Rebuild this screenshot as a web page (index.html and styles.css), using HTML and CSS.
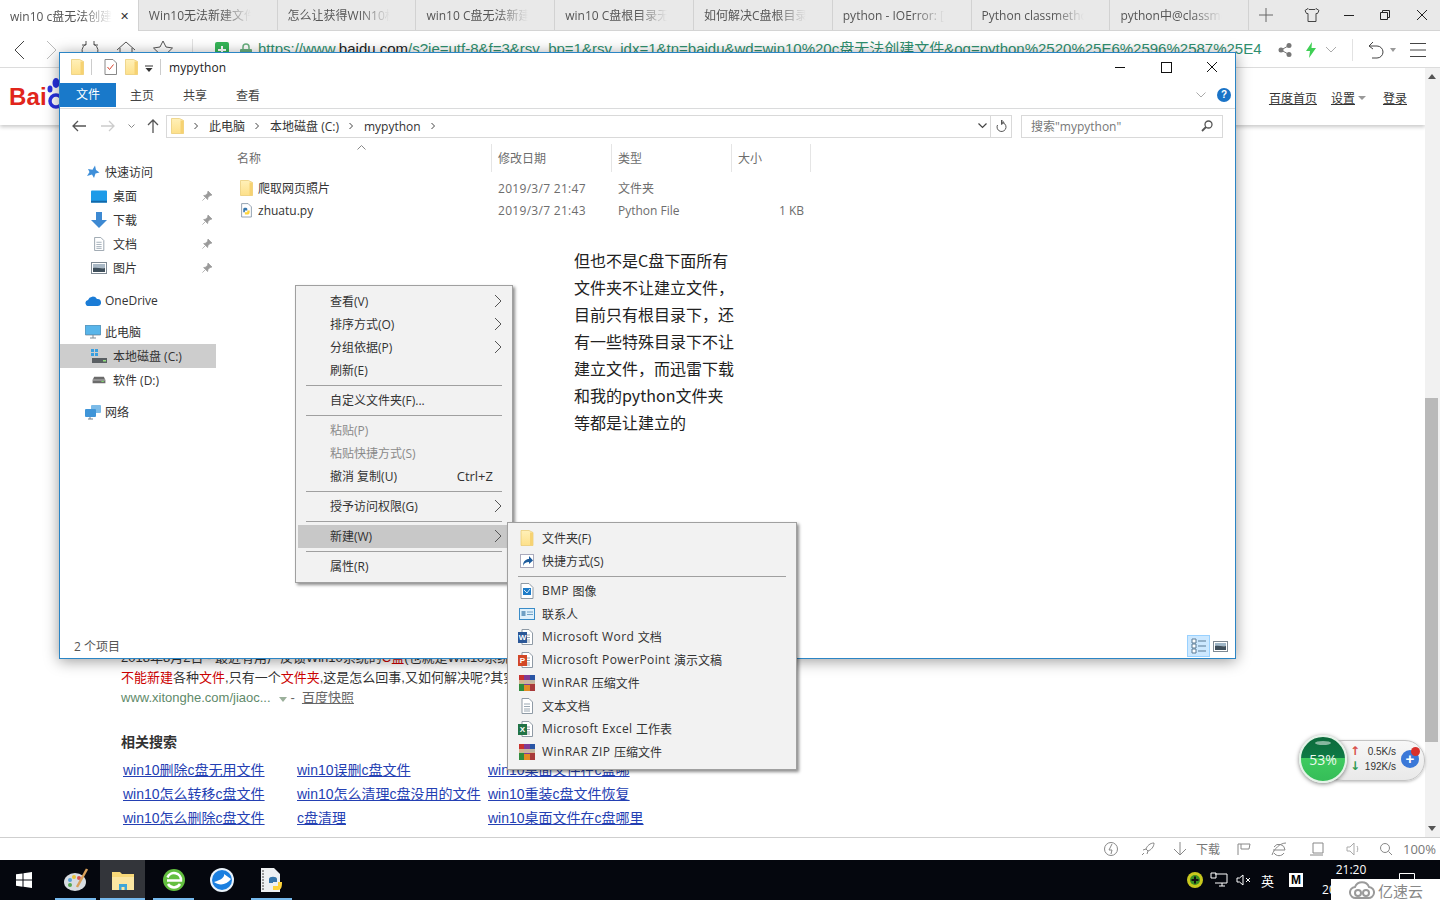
FILE: index.html
```html
<!DOCTYPE html>
<html lang="zh-CN">
<head>
<meta charset="utf-8">
<title>mypython</title>
<link rel="stylesheet" href="styles.css">
</head>
<body>
<svg class="defs" width="0" height="0" aria-hidden="true">
  <defs>
    <linearGradient id="fg" x1="0" y1="0" x2="0" y2="1"><stop offset="0" stop-color="#fff0b8"/><stop offset="1" stop-color="#fde08a"/></linearGradient>
    <symbol id="folder" viewBox="0 0 13 16"><path d="M.5.500h8l4 2v13H.5z" fill="url(#fg)" stroke="#e8c86e" stroke-width=".7"/><path d="M9.500 2.500h3v13h-3z" fill="#f6d272"/></symbol>
    <symbol id="chev" viewBox="0 0 10 14"><path d="M2 1l6 6-6 6" fill="none" stroke="#555" stroke-width="1"/></symbol>
    <symbol id="crumb" viewBox="0 0 6 8"><path d="M1.500 1l3 3-3 3" fill="none" stroke="#444" stroke-width="1"/></symbol>
    <symbol id="pin" viewBox="0 0 12 12"><path d="M7 1l4 4-2 .6-2 2-.4 2L2.600 5.600l2-.4 2-2zM4 8l-2.600 2.600" fill="#9a9a9a" stroke="#9a9a9a" stroke-width=".7"/></symbol>
    <symbol id="disk" viewBox="0 0 18 10"><path d="M3 1h12l2 4v4H1V5z" fill="#6b6b6b"/><path d="M1 5h16" stroke="#ccc"/><rect x="12" y="6" width="3" height="1.500" fill="#7ed36b"/></symbol>
    <symbol id="doc" viewBox="0 0 14 16"><path d="M2 .5h7l3.500 3.500v11.500H2z" fill="#fff" stroke="#8f9aa5"/><path d="M4 6h6M4 8.500h6M4 11h6M4 13h6" stroke="#9aa7b2"/></symbol>
    <symbol id="rar" viewBox="0 0 16 16"><rect width="16" height="16" fill="#7f3b96"/><rect width="5" height="8" fill="#c8322d"/><rect x="11" width="5" height="8" fill="#2a55a5"/><rect y="8" width="5" height="8" fill="#2f8c3c"/><rect x="11" y="8" width="5" height="8" fill="#a83a3a"/><rect x="5" y="10" width="6" height="6" fill="#e28a24"/><rect y="5" width="16" height="4" fill="#d8c9a0" opacity=".85"/></symbol>
    <symbol id="pyfile" viewBox="0 0 16 18"><path d="M2 .5h8l4 4V17H2z" fill="#fff" stroke="#7d8ea0"/><path d="M4 7c0-2 5-2 5 0v2H6v2H4z" fill="#3776ab"/><path d="M12 9c0 2 0 5-3 5H6v-3h3V9z" fill="#ffd43b"/></symbol>
  </defs>
</svg>

<div class="screen">
  <div class="browser">
    <div class="tabbar">
      <div class="tab tab-active"><span class="tab-text">win10 c盘无法创建文件</span><span class="tab-close">✕</span></div>
      <div class="tab"><span class="tab-text">Win10无法新建文件夹</span></div>
      <div class="tab"><span class="tab-text">怎么让获得WIN10权限</span></div>
      <div class="tab"><span class="tab-text">win10 C盘无法新建文件</span></div>
      <div class="tab"><span class="tab-text">win10 C盘根目录无法</span></div>
      <div class="tab"><span class="tab-text">如何解决C盘根目录无</span></div>
      <div class="tab"><span class="tab-text">python - IOError: [Er</span></div>
      <div class="tab"><span class="tab-text">Python classmethod</span></div>
      <div class="tab"><span class="tab-text">python中@classmeth</span></div>
      <div class="tab-tools">
        <svg class="tt-plus" width="16" height="16" viewBox="0 0 16 16"><path d="M8 1v14M1 8h14" stroke="#666" fill="none"/></svg>
        <svg class="tt-shirt" width="16" height="16" viewBox="0 0 16 16"><path d="M4 1.500L1 3.500l1.500 3H4v8h8v-8h1.500l1.500-3-3-2-1 1H5z" stroke="#444" fill="none"/></svg>
        <svg class="tt-min" width="12" height="12" viewBox="0 0 12 12"><path d="M1 6.500h10" stroke="#222" fill="none"/></svg>
        <svg class="tt-max" width="12" height="12" viewBox="0 0 12 12"><path d="M1.500 3.500h7v7h-7zM3.500 3.500v-2h7v7h-2" stroke="#222" fill="none"/></svg>
        <svg class="tt-close" width="12" height="12" viewBox="0 0 12 12"><path d="M1 1l10 10M11 1L1 11" stroke="#222" fill="none"/></svg>
      </div>
    </div>

    <div class="toolbar">
      <svg class="tb-back" width="12" height="20" viewBox="0 0 12 20"><path d="M11 1L2 10l9 9" stroke="#444" fill="none"/></svg>
      <svg class="tb-fwd" width="12" height="20" viewBox="0 0 12 20"><path d="M1 1l9 9-9 9" stroke="#bbb" fill="none"/></svg>
      <svg class="tb-reload" width="20" height="20" viewBox="0 0 20 20"><path d="M6 4a8 8 0 1 0 8 0M6 1v4H2M14 1v4h4" stroke="#555" fill="none"/></svg>
      <svg class="tb-home" width="20" height="20" viewBox="0 0 20 20"><path d="M1 10l9-8 9 8M4 8v10h12V8" stroke="#555" fill="none"/></svg>
      <svg class="tb-star" width="20" height="20" viewBox="0 0 20 20"><path d="M10 1l3 6 6.500 1-4.700 4.500 1.200 6.500L10 16l-6 3 1.200-6.500L.5 8 7 7z" stroke="#555" fill="none"/></svg>
      <span class="tb-sep"></span>
      <svg class="tb-safe" width="14" height="16" viewBox="0 0 14 16"><rect width="14" height="16" rx="2" fill="#35b558"/><path d="M7 4v8M3 8h8" stroke="#fff" stroke-width="2"/></svg>
      <svg class="tb-lock" width="12" height="14" viewBox="0 0 12 14"><path d="M3 6V4a3 3 0 0 1 6 0v2" stroke="#69b07f" fill="none" stroke-width="1.500"/><rect y="6" width="12" height="8" rx="1" fill="#69b07f"/></svg>
      <span class="url"><span class="url-host">https://www.</span><span class="url-bold">baidu.com</span><span class="url-host">/s?ie=utf-8&amp;f=3&amp;rsv_bp=1&amp;rsv_idx=1&amp;tn=baidu&amp;wd=win10%20c盘无法创建文件&amp;oq=python%2520%25E6%2596%2587%25E4</span></span>
      <svg class="tb-share" width="14" height="14" viewBox="0 0 14 14"><circle cx="11" cy="2.500" r="2.500" fill="#777"/><circle cx="3" cy="7" r="2.500" fill="#777"/><circle cx="11" cy="11.500" r="2.500" fill="#777"/><path d="M11 2.500L3 7l8 4.500" stroke="#777" fill="none"/></svg>
      <svg class="tb-bolt" width="10" height="16" viewBox="0 0 10 16"><path d="M6 0L0 9h4l-1 7 7-10H5.500z" fill="#3fcf55"/></svg>
      <svg class="tb-down" width="12" height="8" viewBox="0 0 12 8"><path d="M1 1l5 5 5-5" stroke="#aaa" fill="none"/></svg>
      <span class="tb-sep tb-sep2"></span>
      <svg class="tb-undo" width="18" height="18" viewBox="0 0 18 18"><path d="M6 1L2 5l4 3M2 5h8a6 6 0 0 1 0 12H5" stroke="#444" fill="none"/></svg>
      <span class="tb-caret"></span>
      <svg class="tb-menu" width="18" height="16" viewBox="0 0 18 16"><path d="M1 1.500h16M1 8h16M1 14.500h16" stroke="#444" fill="none"/></svg>
    </div>

    <div class="viewport">
      <div class="page">
        <header class="bd-header">
          <div class="bd-logo"><span class="bd-bai">Bai</span>
            <svg class="bd-paw" width="16" height="32" viewBox="0 0 16 32"><ellipse cx="9" cy="5" rx="3.500" ry="5" fill="#2932e1"/><ellipse cx="3" cy="11" rx="2.500" ry="3.500" fill="#2932e1"/><circle cx="9" cy="23" r="6" fill="none" stroke="#2932e1" stroke-width="3.500"/></svg>
          </div>
          <nav class="bd-nav">
            <a class="bd-link">百度首页</a>
            <a class="bd-link bd-set">设置</a><span class="bd-caret"></span>
            <a class="bd-link bd-login">登录</a>
          </nav>
        </header>
        <div class="results">
          <p class="snip">2018年8月2日 - 最近有用户反馈Win10系统的<em>C盘</em>(也就是Win10系统</p>
          <p class="snip"><em>不能新建</em>各种<em>文件</em>,只有一个<em>文件夹</em>,这是怎么回事,又如何解决呢?其实</p>
          <p class="snip src">www.xitonghe.com/jiaoc...<span class="src-caret"></span><span class="src-dash">-</span><a class="cache">百度快照</a></p>
          <h3 class="rel-title">相关搜索</h3>
          <div class="rel-grid">
            <a>win10删除c盘无用文件</a><a>win10误删c盘文件</a><a>win10桌面文件在c盘哪</a>
            <a>win10怎么转移c盘文件</a><a>win10怎么清理c盘没用的文件</a><a>win10重装c盘文件恢复</a>
            <a>win10怎么删除c盘文件</a><a>c盘清理</a><a>win10桌面文件在c盘哪里</a>
          </div>
        </div>
      </div>
      <div class="scrollbar">
        <span class="sb-up"></span>
        <span class="sb-thumb"></span>
        <span class="sb-down"></span>
      </div>
    </div>

    <div class="statusbar">
      <svg class="st-a" width="16" height="16" viewBox="0 0 16 16"><circle cx="8" cy="8" r="6.500" stroke="#888" fill="none"/><path d="M9 3L6 9h3l-1 4" stroke="#888" fill="none"/></svg>
      <svg class="st-b" width="16" height="16" viewBox="0 0 16 16"><path d="M14 2c-4 0-7 3-8 6l2 2c3-1 6-4 6-8zM6 8L3 9M8 10l-1 3M4 12l-2 2" stroke="#888" fill="none"/></svg>
      <svg class="st-c" width="14" height="16" viewBox="0 0 14 16"><path d="M7 1v13M1 8l6 6 6-6" stroke="#888" fill="none"/></svg>
      <span class="st-dl">下载</span>
      <svg class="st-d" width="16" height="16" viewBox="0 0 16 16"><path d="M2 14V3h12l-1 5H5M5 3v5" stroke="#888" fill="none"/></svg>
      <svg class="st-e" width="16" height="16" viewBox="0 0 16 16"><path d="M2 9h12a6 6 0 0 0-11-3M3 12a6 6 0 0 0 10 0M1 14C3 8 9 2 15 2" stroke="#888" fill="none"/></svg>
      <svg class="st-f" width="16" height="16" viewBox="0 0 16 16"><path d="M4 2h10v10H4zM1 14h13" stroke="#888" fill="none"/></svg>
      <svg class="st-g" width="16" height="16" viewBox="0 0 16 16"><path d="M1 6h3l4-4v12l-4-4H1zM11 5c1 2 1 4 0 6" stroke="#aaa" fill="none"/></svg>
      <svg class="st-h" width="14" height="14" viewBox="0 0 14 14"><circle cx="6" cy="6" r="4.500" stroke="#888" fill="none"/><path d="M9.500 9.500L13 13" stroke="#888"/></svg>
      <span class="st-zoom">100%</span>
    </div>
  </div>

  <div class="taskbar">
    <svg class="task-win" width="16" height="16" viewBox="0 0 16 16"><path d="M0 2.300l6.500-.9v6.200H0zM7.500 1.300L16 0v7.600H7.500zM0 8.600h6.500v6.100L0 13.800zM7.500 8.600H16V16l-8.500-1.200z" fill="#fff"/></svg>
    <div class="task-app task-on task-a1"><svg width="26" height="26" viewBox="0 0 26 26"><ellipse cx="12" cy="15" rx="11" ry="9" fill="#d8dde2"/><circle cx="7" cy="13" r="2" fill="#5aa3d8"/><circle cx="11" cy="10" r="2" fill="#e8c33a"/><circle cx="16" cy="11" r="2" fill="#d9534f"/><circle cx="7" cy="18" r="2" fill="#55a84f"/><path d="M24 2L14 20" stroke="#d9a05a" stroke-width="2.500"/></svg></div>
    <div class="task-app task-on task-active"><svg width="24" height="22" viewBox="0 0 24 22"><path d="M1 3h8l2 2h12v16H1z" fill="#f8d878"/><path d="M1 8h22v13H1z" fill="#fbe6a2"/><path d="M8 21v-6h8v6h-2.500v-3h-3v3z" fill="#3ea6d8"/></svg></div>
    <div class="task-app task-on task-a3"><svg width="24" height="24" viewBox="0 0 24 24"><circle cx="12" cy="12" r="11" fill="#63bf3f"/><path d="M5 12.500h14a7 7 0 0 0-13.500-3M18 16a7 7 0 0 1-12 0" fill="none" stroke="#fff" stroke-width="2.500"/></svg></div>
    <div class="task-app task-a4"><svg width="26" height="26" viewBox="0 0 26 26"><circle cx="13" cy="13" r="12" fill="#eaf3fb"/><circle cx="13" cy="13" r="10" fill="#1a7fe0"/><path d="M5 15c5 4 13 3 17-3l-7-5c1 3-3 6-10 8z" fill="#fff"/></svg></div>
    <div class="task-app task-on"><svg width="24" height="26" viewBox="0 0 24 26"><path d="M1 1h13l6 6v18H1z" fill="#eef0f2"/><path d="M3 3v20" stroke="#999" stroke-width="2" stroke-dasharray="2 1"/><path d="M9 12c0-3 8-3 8 0v3h-4v1H9z" fill="#3776ab"/><path d="M22 15c0 3 0 8-4 8h-5v-4h5v-4z" fill="#ffd43b"/></svg></div>
    <div class="tray">
      <svg class="tray-360" width="18" height="18" viewBox="0 0 18 18"><circle cx="9" cy="9" r="8" fill="#c8c81e"/><circle cx="9" cy="9" r="5" fill="#3b8f22"/><path d="M9 5.500v7M5.500 9h7" stroke="#111" stroke-width="2"/></svg>
      <svg class="tray-net" width="18" height="16" viewBox="0 0 18 16"><path d="M5 2h12v9H5M9 14h6M12 11v3M1 1h5v5H1z" stroke="#fff" fill="none"/></svg>
      <svg class="tray-vol" width="16" height="14" viewBox="0 0 16 14"><path d="M1 5h2.500L7 2v10L3.500 9H1zM10 5l4 4M14 5l-4 4" stroke="#fff" fill="none"/></svg>
      <span class="tray-ime">英</span>
      <span class="tray-m">M</span>
      <div class="clock"><span class="clock-t">21:20</span><span class="clock-d">2019/3/7</span></div>
      <svg class="tray-note" width="16" height="14" viewBox="0 0 16 14"><path d="M.5.500h15v10H8l-2 3v-3H.5z" stroke="#fff" fill="none"/></svg>
    </div>
  </div>
  <div class="underscreen"></div>

  <div class="explorer">
    <div class="ex-title">
      <svg class="qa-f1" width="13" height="16"><use href="#folder"/></svg>
      <span class="qa-sep"></span>
      <svg class="qa-doc" width="13" height="16" viewBox="0 0 13 16"><path d="M1 .5h8l3.500 3.500v11.500H1z" fill="#fff" stroke="#888"/><path d="M3.500 8l2 2.500 4-5" stroke="#d9452f" fill="none"/></svg>
      <svg class="qa-f2" width="13" height="16"><use href="#folder"/></svg>
      <svg class="qa-arrow" width="8" height="8" viewBox="0 0 8 8"><path d="M0 1h8" stroke="#333"/><path d="M.5 3h7L4 7z" fill="#333"/></svg>
      <span class="qa-sep qa-sep2"></span>
      <span class="ex-name">mypython</span>
      <svg class="ex-min" width="12" height="12" viewBox="0 0 12 12"><path d="M1 6.500h10" stroke="#111"/></svg>
      <svg class="ex-max" width="11" height="11" viewBox="0 0 11 11"><rect x=".5" y=".5" width="10" height="10" fill="none" stroke="#111"/></svg>
      <svg class="ex-close" width="12" height="12" viewBox="0 0 12 12"><path d="M1 1l10 10M11 1L1 11" stroke="#111"/></svg>
    </div>
    <div class="ex-ribbon">
      <span class="rb-file">文件</span>
      <span class="rb-tab">主页</span>
      <span class="rb-tab">共享</span>
      <span class="rb-tab">查看</span>
      <svg class="rb-chev" width="10" height="6" viewBox="0 0 10 6"><path d="M.5.500L5 5 9.500.5" stroke="#aaa" fill="none"/></svg>
      <span class="rb-help">?</span>
    </div>
    <div class="ex-addr">
      <svg class="ad-back" width="14" height="12" viewBox="0 0 14 12"><path d="M6 1L1 6l5 5M1 6h13" stroke="#555" stroke-width="1.300" fill="none"/></svg>
      <svg class="ad-fwd" width="14" height="12" viewBox="0 0 14 12"><path d="M8 1l5 5-5 5M0 6h13" stroke="#ccc" stroke-width="1.300" fill="none"/></svg>
      <svg class="ad-drop" width="7" height="5" viewBox="0 0 7 5"><path d="M.5.500l3 3 3-3" stroke="#888" fill="none"/></svg>
      <svg class="ad-up" width="12" height="14" viewBox="0 0 12 14"><path d="M1 6l5-5 5 5M6 1v13" stroke="#555" stroke-width="1.300" fill="none"/></svg>
      <div class="ad-box">
        <svg class="ad-folder" width="13" height="16"><use href="#folder"/></svg>
        <svg class="ad-cr" width="6" height="8"><use href="#crumb"/></svg>
        <span class="ad-txt">此电脑</span>
        <svg class="ad-cr" width="6" height="8"><use href="#crumb"/></svg>
        <span class="ad-txt">本地磁盘 (C:)</span>
        <svg class="ad-cr" width="6" height="8"><use href="#crumb"/></svg>
        <span class="ad-txt">mypython</span>
        <svg class="ad-cr" width="6" height="8"><use href="#crumb"/></svg>
        <svg class="ad-more" width="9" height="6" viewBox="0 0 9 6"><path d="M.5.500l4 4 4-4" stroke="#444" stroke-width="1.200" fill="none"/></svg>
        <span class="ad-refresh"><svg width="11" height="13" viewBox="0 0 11 13"><path d="M5.500 2.500a4.500 4.500 0 1 1-4 2.500M5.500 0v4.500L8 2.500z" stroke="#555" fill="none"/></svg></span>
      </div>
      <div class="ad-search"><span>搜索"mypython"</span><svg width="12" height="12" viewBox="0 0 12 12"><circle cx="7.500" cy="4.500" r="3.500" stroke="#555" fill="none" stroke-width="1.300"/><path d="M5 7l-4 4" stroke="#555" stroke-width="1.800"/></svg></div>
    </div>
    <div class="ex-main">
      <aside class="tree">
        <div class="tree-group">
          <div class="node"><svg class="ico" width="14" height="14" viewBox="0 0 14 14"><path d="M9 .5l1 4.500 3.500 2.500-4 1L8 13 6 9.500 1 11l2.500-4L2 4l4.500.8z" fill="#3f8fd9"/></svg>快速访问</div>
          <div class="node sub"><svg class="ico" width="17" height="13" viewBox="0 0 17 13"><rect width="17" height="13" rx="1" fill="#1e9be8"/><rect y="11" width="17" height="2" fill="#1368a8"/></svg>桌面<svg class="pin" width="12" height="12"><use href="#pin"/></svg></div>
          <div class="node sub"><svg class="ico" width="16" height="16" viewBox="0 0 16 16"><path d="M5 0h6v8h5l-8 8-8-8h5z" fill="#3d89d2"/></svg>下载<svg class="pin" width="12" height="12"><use href="#pin"/></svg></div>
          <div class="node sub"><svg class="ico" width="12" height="14"><use href="#doc"/></svg>文档<svg class="pin" width="12" height="12"><use href="#pin"/></svg></div>
          <div class="node sub"><svg class="ico" width="16" height="12" viewBox="0 0 16 12"><rect x=".5" y=".5" width="15" height="11" fill="#fff" stroke="#7f8a94"/><path d="M2 2h12v4H2z" fill="#aab9c6"/><path d="M2 6c4-1 8 1 12 0v4H2z" fill="#3f4f5b"/></svg>图片<svg class="pin" width="12" height="12"><use href="#pin"/></svg></div>
        </div>
        <div class="tree-group">
          <div class="node"><svg class="ico" width="16" height="11" viewBox="0 0 16 11"><path d="M4 11a3 3 0 0 1-1-6 5 5 0 0 1 9-1 3.500 3.500 0 0 1 1 7z" fill="#1b7cd6"/></svg>OneDrive</div>
        </div>
        <div class="tree-group">
          <div class="node"><svg class="ico" width="16" height="14" viewBox="0 0 16 14"><rect width="16" height="10" rx="1" fill="#58b5ea" stroke="#5a6a78" stroke-width=".6"/><path d="M5 13h6M8 10v3" stroke="#7d8a95"/></svg>此电脑</div>
          <div class="node sub node-sel"><svg class="ico" width="16" height="14" viewBox="0 0 16 14"><rect width="3" height="3" fill="#3aa0e0"/><rect x="4" width="3" height="3" fill="#3aa0e0"/><rect y="4" width="3" height="3" fill="#3aa0e0"/><rect x="4" y="4" width="3" height="3" fill="#3aa0e0"/><path d="M1 9h15v5H1z" fill="#5a5f63"/><rect x="12" y="11" width="3" height="1.500" fill="#8fe07e"/></svg>本地磁盘 (C:)</div>
          <div class="node sub"><svg class="ico" width="16" height="8" viewBox="0 0 18 10"><use href="#disk"/></svg>软件 (D:)</div>
        </div>
        <div class="tree-group">
          <div class="node"><svg class="ico" width="16" height="15" viewBox="0 0 16 15"><rect x="6" width="10" height="8" rx="1" fill="#7cbbe8"/><rect y="4" width="11" height="8" rx="1" fill="#3f95d8"/><path d="M5 12v2M3 14h5" stroke="#6f7f8c"/></svg>网络</div>
        </div>
      </aside>
      <section class="list">
        <div class="list-head">
          <svg class="sort" width="9" height="5" viewBox="0 0 9 5"><path d="M.5 4.500l4-4 4 4" stroke="#888" fill="none"/></svg>
          <span class="h-name">名称</span><span class="h-date">修改日期</span><span class="h-type">类型</span><span class="h-size">大小</span>
        </div>
        <div class="row">
          <span class="c-name"><svg width="13" height="16"><use href="#folder"/></svg>爬取网页照片</span><span class="c-date">2019/3/7 21:47</span><span class="c-type">文件夹</span><span class="c-size"></span>
        </div>
        <div class="row">
          <span class="c-name"><svg width="13" height="15"><use href="#pyfile"/></svg>zhuatu.py</span><span class="c-date">2019/3/7 21:43</span><span class="c-type">Python File</span><span class="c-size">1 KB</span>
        </div>
      </section>
    </div>
    <div class="ex-status">
      <span>2 个项目</span>
      <span class="view view-on"><svg width="18" height="16" viewBox="0 0 18 16"><path d="M2 1h4v4H2zM2 6h4v4H2zM2 11h4v4H2z" fill="#fff" stroke="#5a7a95"/><path d="M8 3h8M8 8h8M8 13h8" stroke="#5a7a95"/></svg></span>
      <span class="view view-off"><svg width="15" height="11" viewBox="0 0 15 11"><rect x=".5" y=".5" width="14" height="10" fill="#fff" stroke="#7f8a94"/><path d="M2 2h11v3H2z" fill="#9fb6c7"/><path d="M2 5c4-1 7 1 11 0v4H2z" fill="#3f4f5b"/></svg></span>
    </div>
  </div>

  <div class="note">但也不是C盘下面所有<br>文件夹不让建立文件，<br>目前只有根目录下，还<br>有一些特殊目录下不让<br>建立文件，而迅雷下载<br>和我的python文件夹<br>等都是让建立的</div>

  <div class="menu menu-main">
    <div class="mi">查看(V)<svg class="arr" width="10" height="14"><use href="#chev"/></svg></div>
    <div class="mi">排序方式(O)<svg class="arr" width="10" height="14"><use href="#chev"/></svg></div>
    <div class="mi">分组依据(P)<svg class="arr" width="10" height="14"><use href="#chev"/></svg></div>
    <div class="mi">刷新(E)</div>
    <div class="msep"></div>
    <div class="mi">自定义文件夹(F)...</div>
    <div class="msep"></div>
    <div class="mi mi-off">粘贴(P)</div>
    <div class="mi mi-off">粘贴快捷方式(S)</div>
    <div class="mi">撤消 复制(U)<span class="key">Ctrl+Z</span></div>
    <div class="msep"></div>
    <div class="mi">授予访问权限(G)<svg class="arr" width="10" height="14"><use href="#chev"/></svg></div>
    <div class="msep"></div>
    <div class="mi mi-hot">新建(W)<svg class="arr" width="10" height="14"><use href="#chev"/></svg></div>
    <div class="msep"></div>
    <div class="mi">属性(R)</div>
  </div>

  <div class="menu menu-new">
    <div class="ni"><svg width="13" height="16"><use href="#folder"/></svg>文件夹(F)</div>
    <div class="ni"><svg width="14" height="14" viewBox="0 0 14 14"><rect x=".5" y=".5" width="13" height="13" fill="#fff" stroke="#aab"/><path d="M3 12c0-5 3-7 6-7V2l4 4.500L9 10V8c-3 0-5 1-6 4z" fill="#1d5c9c"/></svg>快捷方式(S)</div>
    <div class="nsep"></div>
    <div class="ni"><svg width="14" height="16" viewBox="0 0 14 16"><path d="M1 .5h8l4 4v11H1z" fill="#fff" stroke="#8f9aa5"/><rect x="3" y="5" width="8" height="7" fill="#1e7cc8"/><path d="M4 7l3 3 3-4" stroke="#cfe8fa" fill="none"/></svg><span class="lt">BMP </span>图像</div>
    <div class="ni"><svg width="16" height="12" viewBox="0 0 16 12"><rect x=".5" y=".5" width="15" height="11" fill="#dff0fb" stroke="#3a8cc8"/><rect x="2.500" y="3" width="4" height="5" fill="#6f9fc4"/><path d="M8 4h6M8 6.500h6" stroke="#6f9fc4"/></svg>联系人</div>
    <div class="ni"><svg width="16" height="16"><use href="#doc"/></svg><span class="badge b-word">W</span><span class="lt">Microsoft Word </span>文档</div>
    <div class="ni"><svg width="16" height="16"><use href="#doc"/></svg><span class="badge b-ppt">P</span><span class="lt">Microsoft PowerPoint </span>演示文稿</div>
    <div class="ni"><svg width="16" height="16"><use href="#rar"/></svg><span class="lt">WinRAR </span>压缩文件</div>
    <div class="ni"><svg width="16" height="16"><use href="#doc"/></svg>文本文档</div>
    <div class="ni"><svg width="16" height="16"><use href="#doc"/></svg><span class="badge b-xls">X</span><span class="lt">Microsoft Excel </span>工作表</div>
    <div class="ni"><svg width="16" height="16"><use href="#rar"/></svg><span class="lt">WinRAR ZIP </span>压缩文件</div>
  </div>

  <div class="speed">
    <div class="speed-ball"><span>53%</span></div>
    <div class="speed-rates">
      <span class="up-arrow">↑</span><span>0.5K/s</span>
      <span class="down-arrow">↓</span><span>192K/s</span>
    </div>
    <div class="speed-plus">+<i class="speed-dot"></i></div>
  </div>

  <div class="wm">
    <svg width="26" height="19" viewBox="0 0 26 19"><path d="M7 17a5.500 5.500 0 0 1-1-11 7.500 7.500 0 0 1 14 0 5.500 5.500 0 0 1-1 11z" fill="none" stroke="#9a9a9a" stroke-width="2"/><circle cx="9" cy="12" r="3" fill="none" stroke="#9a9a9a" stroke-width="2"/><circle cx="17" cy="12" r="3" fill="none" stroke="#9a9a9a" stroke-width="2"/></svg>
    <span>亿速云</span>
  </div>
</div>
</body>
</html>
```

FILE: styles.css
```css
* { box-sizing: border-box; }
html, body { margin: 0; padding: 0; background: #fff; overflow: hidden; }
body { font-family: "Open Sans", "Noto Sans CJK SC", sans-serif; font-size: 12px; color: #333; }
svg { flex: none; display: block; }
.defs { position: absolute; }
.screen { position: relative; width: 1440px; height: 904px; display: flex; flex-direction: column; overflow: hidden; background: #fff; }

.browser { flex: 1; min-height: 0; display: flex; flex-direction: column; }
.tabbar { height: 31px; display: flex; background: #e9e9e9; border-bottom: 1px solid #d4d4d4; flex: none; }
.tab { width: 138.8px; flex: none; display: flex; align-items: center; padding-left: 10px; border-right: 1px solid #d2d2d2; color: #555; font-size: 12px; }
.tab-active { background: #fff; height: 31px; }
.tab-text { width: 102px; white-space: nowrap; overflow: hidden; -webkit-mask-image: linear-gradient(90deg, #000 70%, transparent 100%); mask-image: linear-gradient(90deg, #000 70%, transparent 100%); }
.tab-close { margin-left: 8px; width: 12px; font-size: 11px; color: #333; }
.tab-tools { flex: 1; display: flex; align-items: center; }
.tt-plus { margin-left: 9px; }
.tt-shirt { margin-left: 30px; }
.tt-min { margin-left: 23px; }
.tt-max { margin-left: 24px; }
.tt-close { margin-left: 25px; }

.toolbar { height: 37px; flex: none; display: flex; align-items: center; background: #fff; border-bottom: 1px solid #dcdcdc; padding-top: 1px; }
.tb-back { margin-left: 13px; }
.tb-fwd { margin-left: 21px; }
.tb-reload { margin-left: 22px; }
.tb-home { margin-left: 16px; }
.tb-star { margin-left: 17px; }
.tb-sep { width: 1px; height: 22px; background: #e2e2e2; margin-left: 19px; }
.tb-safe { margin-left: 22px; }
.tb-lock { margin-left: 11px; }
.url { margin-left: 6px; margin-bottom: 4px; width: 1009px; flex: none; white-space: nowrap; overflow: hidden; font-size: 15px; color: #2f8f6f; font-family: "Liberation Sans", "Noto Sans CJK SC", sans-serif; }
.url-bold { color: #222; }
.tb-share { margin-left: 11px; }
.tb-bolt { margin-left: 14px; }
.tb-down { margin-left: 9px; }
.tb-sep2 { margin-left: 15px; }
.tb-undo { margin-left: 14px; }
.tb-caret { width: 0; height: 0; margin-left: 5px; border: 3px solid transparent; border-top: 4px solid #999; border-bottom: 0; }
.tb-menu { margin-left: 13px; }

.viewport { flex: 1; min-height: 0; display: flex; }
.page { flex: 1; min-width: 0; overflow: hidden; }
.bd-header { height: 57px; display: flex; justify-content: space-between; align-items: center; box-shadow: 0 2px 4px rgba(0,0,0,.22); background: #fff; padding: 0 18px 0 9px; }
.bd-logo { display: flex; align-items: center; }
.bd-bai { font: bold 24px "Liberation Sans", sans-serif; color: #e1251b; letter-spacing: .2px; }
.bd-paw { margin-left: 0; margin-top: -5px; }
.bd-nav { display: flex; align-items: center; margin-top: 3px; }
.bd-link { color: #333; font-size: 12px; text-decoration: underline; }
.bd-set { margin-left: 14px; }
.bd-caret { width: 0; height: 0; margin-left: 3px; border: 4px solid transparent; border-top: 4px solid #999; border-bottom: 0; }
.bd-login { margin-left: 17px; }
.results { padding: 523px 0 0 121px; font-family: "Liberation Sans", "Noto Sans CJK SC", sans-serif; }
.snip { margin: 0; font-size: 13px; line-height: 20px; white-space: nowrap; color: #333; }
.snip em { font-style: normal; color: #c00; }
.src { color: #5f8a6a; display: flex; align-items: center; }
.src-caret { width: 0; height: 0; margin: 2px 4px 0 8px; border: 4px solid transparent; border-top: 5px solid #9bb09b; border-bottom: 0; }
.src-dash { margin: 0 7px 0 0; color: #666; }
.cache { color: #666; text-decoration: underline; }
.rel-title { margin: 24px 0 5px; font-size: 14px; line-height: 20px; font-weight: bold; color: #333; }
.rel-grid { display: grid; grid-template-columns: 174px 191px 1fr; grid-auto-rows: 24px; padding-left: 2px; font-size: 14px; align-items: center; }
.rel-grid a { color: #2440b3; text-decoration: underline; white-space: nowrap; }

.scrollbar { width: 15px; flex: none; background: #f1f1f1; position: relative; }
.sb-up { position: absolute; top: 6px; left: 3px; width: 0; height: 0; border: 4px solid transparent; border-bottom: 5px solid #555; border-top: 0; }
.sb-thumb { position: absolute; top: 330px; left: 0; width: 13px; height: 344px; background: #b9b9b9; }
.sb-down { position: absolute; bottom: 6px; left: 3px; width: 0; height: 0; border: 4px solid transparent; border-top: 5px solid #555; border-bottom: 0; }

.statusbar { height: 23px; flex: none; display: flex; align-items: center; justify-content: flex-end; background: #fff; border-top: 1px solid #cfcfcf; color: #777; padding-right: 4px; }
.st-a { margin-right: 21px; }
.st-b { margin-right: 17px; }
.st-c { margin-right: 9px; }
.st-dl { margin-right: 16px; }
.st-d { margin-right: 19px; }
.st-e { margin-right: 22px; }
.st-f { margin-right: 21px; }
.st-g { margin-right: 17px; }
.st-h { margin-right: 10px; }
.st-zoom { font-size: 13px; }

.taskbar { height: 40px; flex: none; background: #05070e; display: flex; align-items: center; color: #fff; padding-left: 16px; }
.task-win { margin-right: 21px; }
.task-app { width: 45px; height: 40px; display: flex; align-items: center; justify-content: center; position: relative; }
.task-a1 { margin-right: 2px; }
.task-active { background: #33353a; margin-right: 6px; }
.task-a3 { margin-right: 3px; }
.task-a4 { margin-right: 5px; }
.task-on::after { content: ""; position: absolute; left: 2px; right: 2px; bottom: 0; height: 2px; background: #76b9ed; }
.task-active::after { left: 0; right: 0; }
.tray { margin-left: auto; display: flex; align-items: center; padding-right: 25px; }
.tray-net { margin-left: 6px; }
.tray-vol { margin-left: 8px; }
.tray-ime { margin-left: 9px; font-size: 13px; }
.tray-m { margin-left: 15px; width: 14px; height: 14px; background: #fff; color: #000; font: bold 12px/14px "Liberation Sans", sans-serif; text-align: center; }
.clock { margin-left: 12px; width: 64px; display: flex; flex-direction: column; align-items: center; font-size: 12px; line-height: 20px; }
.clock-t { margin-left: 8px; }
.clock-d { white-space: nowrap; }
.tray-note { margin-left: 20px; }
.underscreen { height: 4px; flex: none; background: #fff; }

.explorer { position: absolute; left: 59px; top: 52px; width: 1177px; height: 607px; background: #fff; border: 1px solid #2b85c5; box-shadow: 0 2px 14px rgba(0,0,0,.4); display: flex; flex-direction: column; color: #333; }
.ex-title { height: 28px; flex: none; display: flex; align-items: center; padding-left: 11px; }
.qa-sep { width: 1px; height: 16px; background: #ccc; margin-left: 7px; }
.qa-doc { margin-left: 12px; }
.qa-f2 { margin-left: 8px; }
.qa-arrow { margin-left: 7px; margin-top: 3px; }
.qa-sep2 { margin-left: 7px; }
.ex-name { margin-left: 8px; font-size: 12px; color: #222; letter-spacing: .05px; }
.ex-min { margin-left: auto; }
.ex-max { margin-left: 35px; }
.ex-close { margin-left: 34px; margin-right: 17px; }
.ex-ribbon { height: 28px; flex: none; display: flex; align-items: center; border-bottom: 1px solid #dadbdc; }
.rb-file { width: 56px; height: 24px; line-height: 24px; text-align: center; background: #1979ca; color: #fff; }
.rb-tab { margin-left: 14px; width: 24px; text-align: center; white-space: nowrap; margin-right: 15px; color: #444; }
.rb-chev { margin-left: auto; }
.rb-help { width: 14px; height: 14px; border-radius: 50%; background: #1a73c7; color: #fff; font: bold 10px/14px "Liberation Sans", sans-serif; text-align: center; margin: 0 4px 0 11px; }
.ex-addr { height: 34px; flex: none; display: flex; align-items: center; }
.ad-back { margin-left: 12px; }
.ad-fwd { margin-left: 15px; }
.ad-drop { margin-left: 13px; }
.ad-up { margin-left: 12px; }
.ad-box { margin-left: 7px; width: 846px; height: 23px; border: 1px solid #d9d9d9; display: flex; align-items: center; padding-left: 4px; color: #333; }
.ad-cr { margin: 0 10px 0 9px; }
.ad-more { margin-left: auto; margin-right: 3px; }
.ad-refresh { width: 21px; height: 21px; border-left: 1px solid #d9d9d9; display: flex; align-items: center; justify-content: center; }
.ad-search { margin-left: 9px; width: 202px; height: 23px; border: 1px solid #d9d9d9; display: flex; align-items: center; justify-content: space-between; padding: 0 9px; color: #777; }
.ex-main { flex: 1; min-height: 0; display: flex; }
.tree { width: 156px; flex: none; padding-top: 17px; color: #333; }
.tree-group { margin-bottom: 8px; }
.node { height: 24px; display: flex; align-items: center; padding-left: 25px; position: relative; white-space: nowrap; }
.node .ico { width: 16px; margin-right: 4px; }
.node.sub { padding-left: 31px; }
.node.sub .ico { margin-right: 6px; }
.node-sel { background: #cdcdcd; }
.pin { position: absolute; left: 141px; top: 6px; }
.list { flex: 1; min-width: 0; padding-left: 21px; position: relative; }
.list-head { height: 28px; margin-top: 1px; display: flex; align-items: center; color: #6d6d6d; position: relative; }
.sort { position: absolute; left: 120px; top: 1px; }
.h-name, .c-name { width: 254px; }
.h-date, .c-date { width: 120px; padding-left: 6px; height: 100%; display: flex; align-items: center; border-left: 1px solid #e5e5e5; }
.c-date { letter-spacing: .3px; }
.h-type, .c-type { width: 120px; padding-left: 6px; height: 100%; display: flex; align-items: center; border-left: 1px solid #e5e5e5; }
.h-size { width: 80px; padding-left: 6px; height: 100%; display: flex; align-items: center; border-left: 1px solid #e5e5e5; border-right: 1px solid #e5e5e5; }
.row { height: 22px; display: flex; align-items: center; color: #6d6d6d; }
.list-head + .row { margin-top: 5px; }
.c-name { display: flex; align-items: center; gap: 5px; color: #333; padding-left: 3px; }
.c-date, .c-type { border-left-color: transparent; }
.c-size { width: 73px; text-align: right; }
.ex-status { height: 24px; flex: none; display: flex; align-items: center; padding-left: 14px; color: #555; }
.view { display: flex; align-items: center; justify-content: center; height: 22px; }
.view-on { margin-left: auto; width: 23px; margin-right: 2px; background: #cce8ff; border: 1px solid #99d1ff; }
.view-off { width: 17px; margin-right: 6px; }

.note { position: absolute; left: 574px; top: 247px; font-size: 16px; line-height: 27px; color: #222; font-family: "Noto Sans CJK SC", sans-serif; white-space: nowrap; }

.menu { position: absolute; background: #f2f2f2; border: 1px solid #a0a0a0; box-shadow: 2px 2px 3px rgba(0,0,0,.45); color: #333; font-size: 12px; }
.menu-main { left: 295px; top: 285px; width: 218px; height: 298px; padding: 4px 2px; }
.mi { height: 23px; display: flex; align-items: center; padding: 0 0 2px 32px; position: relative; white-space: nowrap; }
.mi-off { color: #8a8a8a; }
.mi-hot { background: #c8c8c8; }
.arr { position: absolute; right: 7px; top: 4px; }
.key { position: absolute; right: 17px; font-size: 13px; }
.msep { height: 1px; background: #a0a0a0; margin: 3px 8px; }
.menu-new { left: 507px; top: 522px; width: 290px; height: 248px; padding: 4px 0; }
.ni { height: 23px; display: flex; align-items: center; padding: 0 0 2px 11px; position: relative; white-space: pre; }
.ni svg { width: 16px; margin-right: 7px; }
.lt { letter-spacing: .4px; }
.nsep { height: 1px; background: #a0a0a0; margin: 3px 10px; }
.badge { position: absolute; left: 10px; top: 6px; width: 9px; height: 11px; font: bold 8px/11px "Liberation Sans", sans-serif; color: #fff; text-align: center; }
.b-word { background: #2b5797; }
.b-ppt { background: #d24726; }
.b-xls { background: #217346; }

.speed { position: absolute; left: 1299px; top: 735px; width: 126px; height: 48px; }
.speed::before { content: ""; position: absolute; left: 24px; top: 5px; right: 0; height: 39px; border-radius: 20px; background: linear-gradient(#f7f7f7, #e9e9e9); border: 1px solid #c4c4c4; box-shadow: 0 1px 3px rgba(0,0,0,.25); }
.speed-ball { position: absolute; left: 0; top: 0; width: 48px; height: 48px; border-radius: 50%; border: 2px solid #e4f3e8; background: linear-gradient(#0c6a3c 0, #0e7a45 47%, #3ecb5f 47%, #35bd58 100%); box-shadow: 0 1px 4px rgba(0,0,0,.5); display: flex; align-items: center; justify-content: center; color: #eef9f0; font-size: 14px; }
.speed-ball::before { content: ""; position: absolute; left: 14px; top: 4px; width: 16px; height: 4px; border-radius: 50%; background: rgba(255,255,255,.5); }
.speed-rates { position: absolute; left: 51px; top: 9px; width: 46px; display: grid; grid-template-columns: 10px 1fr; justify-items: end; font-size: 10px; line-height: 15px; color: #333; font-family: "Liberation Sans", sans-serif; }
.up-arrow { color: #d8504a; justify-self: start; font: bold 12px/15px "DejaVu Sans", sans-serif; }
.down-arrow { color: #2f9a52; justify-self: start; font: bold 12px/15px "DejaVu Sans", sans-serif; }
.speed-plus { position: absolute; left: 102px; top: 15px; width: 18px; height: 18px; border-radius: 50%; background: #3a78d8; color: #fff; font: bold 15px/18px "Liberation Sans", sans-serif; text-align: center; }
.speed-dot { position: absolute; left: 10px; top: -3px; width: 9px; height: 9px; border-radius: 50%; background: #d9302c; }

.wm { position: absolute; right: 0; bottom: 0; width: 109px; height: 25px; background: #fff; display: flex; align-items: center; gap: 3px; padding: 0 0 2px 18px; color: #888; font-size: 15px; }
```
